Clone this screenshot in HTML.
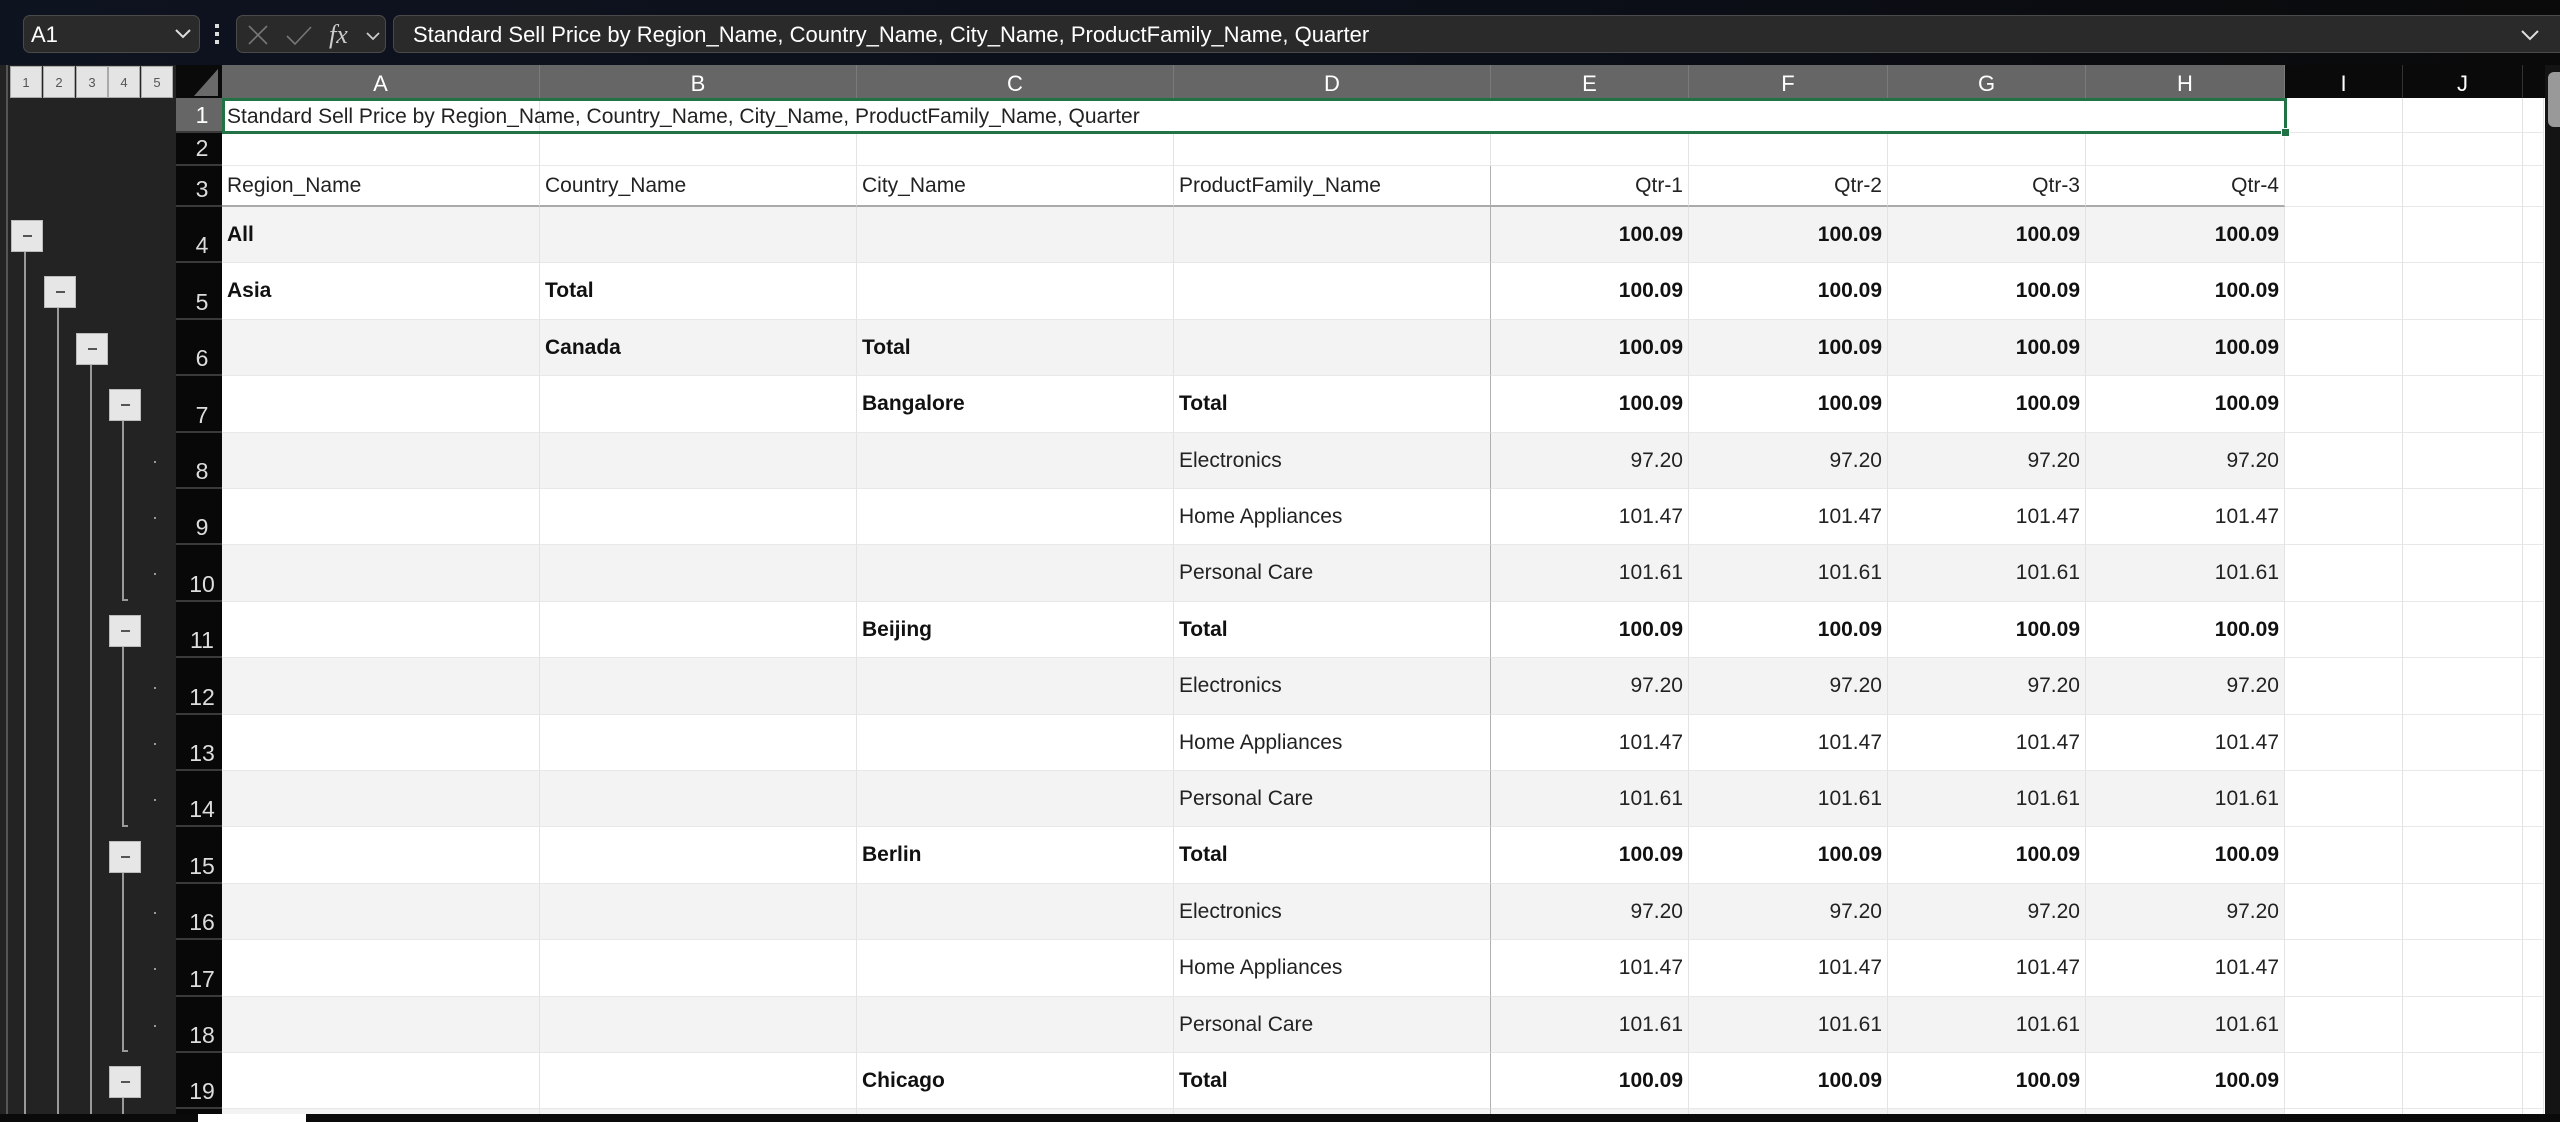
<!DOCTYPE html>
<html><head><meta charset="utf-8"><style>
*{margin:0;padding:0;box-sizing:border-box}
body{width:2560px;height:1122px;overflow:hidden;background:#0c1018;font-family:"Liberation Sans",Arial,sans-serif;position:relative}
.abs{position:absolute}
.top{left:0;top:0;width:2560px;height:65px;background:linear-gradient(90deg,#0e1320,#0b0f18 60%,#0a0a0a)}
.box{position:absolute;top:15px;height:38px;background:#2a2a2a;border:1px solid #4a4a4a;border-radius:7px;color:#fff}
.outline{left:0;top:65px;width:176px;height:1050px;background:#232323}
.lvl{position:absolute;top:66px;height:32px;width:32px;background:#e4e4e4;border:1px solid #aaa;color:#555;font-size:13px;text-align:center;line-height:31px}
.btn{position:absolute;width:32px;height:32px;background:#e6e6e6;border:1px solid #bbb}
.btn:after{content:"";position:absolute;left:11px;top:14px;width:9px;height:2px;background:#555}
.vl{position:absolute;width:2px;background:#9a9a9a}
.dot{position:absolute;width:2px;height:2px;background:#999;left:154px}
.colh{position:absolute;top:65px;height:33px;color:#fff;font-size:22px;text-align:center;line-height:38px;border-right:1px solid #7a7a7a}
.rh{position:absolute;left:176px;width:46px;background:#080808;color:#ddd;font-size:23px;text-align:center;border-bottom:2px solid #3a3a3a;display:flex;align-items:flex-end;justify-content:center;padding-bottom:2px;padding-left:6px}
.row{position:absolute;left:222px;width:2323px;display:flex;background:#fff}
.c{height:100%;border-right:1px solid #e3e3e3;border-bottom:1px solid #e8e8e8;font-size:21px;color:#222;padding:0 5px;white-space:nowrap;display:flex;align-items:center;overflow:visible}
.r{justify-content:flex-end}
.b{font-weight:bold;color:#111}
.s .st{background:#f3f3f3}
.w0{width:318px}.w1{width:317px}.w4{width:198px}.w5{width:199px}.wI{width:118px}.wJ{width:120px}.wK{width:21px}
.dk{border-right:1px solid #b0b0b0}
.hb{border-bottom:2px solid #aaa}
</style></head><body>
<div class="abs top"></div>
<div class="box" style="left:23px;width:177px;"><span style="position:absolute;left:7px;top:6px;font-size:22px">A1</span><svg class="abs" style="left:150px;top:12px" width="18" height="12"><path d="M2 2 L9 9 L16 2" stroke="#ddd" stroke-width="2" fill="none"/></svg></div>
<div class="abs" style="left:215px;top:24px;width:4px;height:4px;background:#ddd"></div>
<div class="abs" style="left:215px;top:32px;width:4px;height:4px;background:#ddd"></div>
<div class="abs" style="left:215px;top:40px;width:4px;height:4px;background:#ddd"></div>
<div class="box" style="left:236px;width:150px;"><svg class="abs" style="left:8px;top:6px" width="140" height="28"><path d="M4 4 L22 22 M22 4 L4 22" stroke="#777" stroke-width="1.6"/><path d="M42 14 L50 22 L66 5" stroke="#777" stroke-width="1.6" fill="none"/><text x="84" y="21" font-family="Liberation Serif,serif" font-style="italic" font-size="26" fill="#ccc">fx</text><path d="M122 11 L128 17 L134 11" stroke="#ccc" stroke-width="1.8" fill="none"/></svg></div>
<div class="box" style="left:393px;width:2175px;"><span style="position:absolute;left:19px;top:6px;font-size:22px">Standard Sell Price by Region_Name, Country_Name, City_Name, ProductFamily_Name, Quarter</span><svg class="abs" style="left:2126px;top:13px" width="20" height="12"><path d="M2 2 L10 10 L18 2" stroke="#ddd" stroke-width="2" fill="none"/></svg></div>

<div class="abs outline"></div>
<div class="lvl" style="left:10px">1</div><div class="lvl" style="left:43px">2</div><div class="lvl" style="left:76px">3</div><div class="lvl" style="left:108px">4</div><div class="lvl" style="left:141px">5</div>
<div class="abs" style="left:176px;top:65px;width:46px;height:33px;background:#0a0a0a"></div>
<svg class="abs" style="left:176px;top:65px" width="46" height="33"><polygon points="42,4 42,31 18,31" fill="#6a6a6a"/></svg>

<div class="vl" style="left:6px;top:65px;height:1050px;background:#555"></div>
<div class="vl" style="left:24px;top:252px;height:863px"></div>
<div class="vl" style="left:57px;top:308px;height:807px"></div>
<div class="vl" style="left:90px;top:365px;height:750px"></div>
<div class="vl" style="left:122px;top:421px;height:180px"></div><div class="vl" style="left:122px;top:599px;width:6px;height:2px"></div>
<div class="vl" style="left:122px;top:647px;height:180px"></div><div class="vl" style="left:122px;top:825px;width:6px;height:2px"></div>
<div class="vl" style="left:122px;top:872px;height:180px"></div><div class="vl" style="left:122px;top:1050px;width:6px;height:2px"></div>
<div class="vl" style="left:122px;top:1098px;height:20px"></div>
<div class="btn" style="left:11px;top:220px"></div>
<div class="btn" style="left:44px;top:276px"></div>
<div class="btn" style="left:76px;top:333px"></div>
<div class="btn" style="left:109px;top:389px"></div>
<div class="btn" style="left:109px;top:615px"></div>
<div class="btn" style="left:109px;top:841px"></div>
<div class="btn" style="left:109px;top:1066px"></div>
<div class="dot" style="top:461px"></div><div class="dot" style="top:517px"></div><div class="dot" style="top:573px"></div>
<div class="dot" style="top:687px"></div><div class="dot" style="top:743px"></div><div class="dot" style="top:799px"></div>
<div class="dot" style="top:912px"></div><div class="dot" style="top:968px"></div><div class="dot" style="top:1025px"></div>

<div class="abs" style="left:222px;top:65px;width:2323px;height:33px;background:#0a0a0a"></div>
<div class="colh" style="left:222px;width:318px;background:#666">A</div>
<div class="colh" style="left:540px;width:317px;background:#666">B</div>
<div class="colh" style="left:857px;width:317px;background:#666">C</div>
<div class="colh" style="left:1174px;width:317px;background:#666">D</div>
<div class="colh" style="left:1491px;width:198px;background:#666">E</div>
<div class="colh" style="left:1689px;width:199px;background:#666">F</div>
<div class="colh" style="left:1888px;width:198px;background:#666">G</div>
<div class="colh" style="left:2086px;width:199px;background:#666">H</div>
<div class="colh" style="left:2285px;width:118px;border-right:1px solid #333">I</div>
<div class="colh" style="left:2403px;width:120px;border-right:1px solid #333">J</div>
<div class="abs" style="left:2545px;top:65px;width:15px;height:1050px;background:#141414"></div>
<div class="abs" style="left:2548px;top:72px;width:12px;height:55px;background:#999;border-radius:6px 0 0 6px"></div>

<div class="rh" style="top:98px;height:35px;background:#666;color:#fff">1</div>
<div class="rh" style="top:133px;height:33px">2</div>
<div class="rh" style="top:166px;height:41px">3</div>
<div class="rh" style="top:207px;height:56px">4</div>
<div class="rh" style="top:263px;height:57px">5</div>
<div class="rh" style="top:320px;height:56px">6</div>
<div class="rh" style="top:376px;height:57px">7</div>
<div class="rh" style="top:433px;height:56px">8</div>
<div class="rh" style="top:489px;height:56px">9</div>
<div class="rh" style="top:545px;height:57px">10</div>
<div class="rh" style="top:602px;height:56px">11</div>
<div class="rh" style="top:658px;height:57px">12</div>
<div class="rh" style="top:715px;height:56px">13</div>
<div class="rh" style="top:771px;height:56px">14</div>
<div class="rh" style="top:827px;height:57px">15</div>
<div class="rh" style="top:884px;height:56px">16</div>
<div class="rh" style="top:940px;height:57px">17</div>
<div class="rh" style="top:997px;height:56px">18</div>
<div class="rh" style="top:1053px;height:56px">19</div>
<div class="rh" style="top:1109px;height:10px"></div>

<div class="row" style="top:98px;height:35px"><div class="c w0" style="overflow:visible;z-index:2;padding-top:4px">Standard Sell Price by Region_Name, Country_Name, City_Name, ProductFamily_Name, Quarter</div><div class="c w1" style="border-right:none"></div><div class="c w1" style="border-right:none"></div><div class="c w1" style="border-right:none"></div><div class="c w4" style="border-right:none"></div><div class="c w5" style="border-right:none"></div><div class="c w4" style="border-right:none"></div><div class="c w5"></div><div class="c wI"></div><div class="c wJ"></div><div class="c wK"></div></div>
<div class="abs" style="left:222px;top:98px;width:2065px;height:36px;border:3px solid #217346;z-index:3"></div>
<div class="abs" style="left:2281px;top:128px;width:9px;height:9px;background:#217346;border:1px solid #fff;z-index:4"></div>

<div class="row" style="top:133px;height:33px"><div class="c w0"></div><div class="c w1"></div><div class="c w1"></div><div class="c w1"></div><div class="c w4"></div><div class="c w5"></div><div class="c w4"></div><div class="c w5"></div><div class="c wI"></div><div class="c wJ"></div><div class="c wK"></div></div>
<div class="row" style="top:166px;height:41px"><div class="c w0 hb">Region_Name</div><div class="c w1 hb">Country_Name</div><div class="c w1 hb">City_Name</div><div class="c w1 dk hb">ProductFamily_Name</div><div class="c w4 r hb">Qtr-1</div><div class="c w5 r hb">Qtr-2</div><div class="c w4 r hb">Qtr-3</div><div class="c w5 r hb">Qtr-4</div><div class="c wI"></div><div class="c wJ"></div><div class="c wK"></div></div>

<div class="row s" style="top:207px;height:56px"><div class="c w0 st b">All</div><div class="c w1 st"></div><div class="c w1 st"></div><div class="c w1 st dk"></div><div class="c w4 st r b">100.09</div><div class="c w5 st r b">100.09</div><div class="c w4 st r b">100.09</div><div class="c w5 st r b">100.09</div><div class="c wI"></div><div class="c wJ"></div><div class="c wK"></div></div>
<div class="row" style="top:263px;height:57px"><div class="c w0 b">Asia</div><div class="c w1 b">Total</div><div class="c w1"></div><div class="c w1 dk"></div><div class="c w4 r b">100.09</div><div class="c w5 r b">100.09</div><div class="c w4 r b">100.09</div><div class="c w5 r b">100.09</div><div class="c wI"></div><div class="c wJ"></div><div class="c wK"></div></div>
<div class="row s" style="top:320px;height:56px"><div class="c w0 st"></div><div class="c w1 st b">Canada</div><div class="c w1 st b">Total</div><div class="c w1 st dk"></div><div class="c w4 st r b">100.09</div><div class="c w5 st r b">100.09</div><div class="c w4 st r b">100.09</div><div class="c w5 st r b">100.09</div><div class="c wI"></div><div class="c wJ"></div><div class="c wK"></div></div>
<div class="row" style="top:376px;height:57px"><div class="c w0"></div><div class="c w1"></div><div class="c w1 b">Bangalore</div><div class="c w1 dk b">Total</div><div class="c w4 r b">100.09</div><div class="c w5 r b">100.09</div><div class="c w4 r b">100.09</div><div class="c w5 r b">100.09</div><div class="c wI"></div><div class="c wJ"></div><div class="c wK"></div></div>
<div class="row s" style="top:433px;height:56px"><div class="c w0 st"></div><div class="c w1 st"></div><div class="c w1 st"></div><div class="c w1 st dk">Electronics</div><div class="c w4 st r">97.20</div><div class="c w5 st r">97.20</div><div class="c w4 st r">97.20</div><div class="c w5 st r">97.20</div><div class="c wI"></div><div class="c wJ"></div><div class="c wK"></div></div>
<div class="row" style="top:489px;height:56px"><div class="c w0"></div><div class="c w1"></div><div class="c w1"></div><div class="c w1 dk">Home Appliances</div><div class="c w4 r">101.47</div><div class="c w5 r">101.47</div><div class="c w4 r">101.47</div><div class="c w5 r">101.47</div><div class="c wI"></div><div class="c wJ"></div><div class="c wK"></div></div>
<div class="row s" style="top:545px;height:57px"><div class="c w0 st"></div><div class="c w1 st"></div><div class="c w1 st"></div><div class="c w1 st dk">Personal Care</div><div class="c w4 st r">101.61</div><div class="c w5 st r">101.61</div><div class="c w4 st r">101.61</div><div class="c w5 st r">101.61</div><div class="c wI"></div><div class="c wJ"></div><div class="c wK"></div></div>
<div class="row" style="top:602px;height:56px"><div class="c w0"></div><div class="c w1"></div><div class="c w1 b">Beijing</div><div class="c w1 dk b">Total</div><div class="c w4 r b">100.09</div><div class="c w5 r b">100.09</div><div class="c w4 r b">100.09</div><div class="c w5 r b">100.09</div><div class="c wI"></div><div class="c wJ"></div><div class="c wK"></div></div>
<div class="row s" style="top:658px;height:57px"><div class="c w0 st"></div><div class="c w1 st"></div><div class="c w1 st"></div><div class="c w1 st dk">Electronics</div><div class="c w4 st r">97.20</div><div class="c w5 st r">97.20</div><div class="c w4 st r">97.20</div><div class="c w5 st r">97.20</div><div class="c wI"></div><div class="c wJ"></div><div class="c wK"></div></div>
<div class="row" style="top:715px;height:56px"><div class="c w0"></div><div class="c w1"></div><div class="c w1"></div><div class="c w1 dk">Home Appliances</div><div class="c w4 r">101.47</div><div class="c w5 r">101.47</div><div class="c w4 r">101.47</div><div class="c w5 r">101.47</div><div class="c wI"></div><div class="c wJ"></div><div class="c wK"></div></div>
<div class="row s" style="top:771px;height:56px"><div class="c w0 st"></div><div class="c w1 st"></div><div class="c w1 st"></div><div class="c w1 st dk">Personal Care</div><div class="c w4 st r">101.61</div><div class="c w5 st r">101.61</div><div class="c w4 st r">101.61</div><div class="c w5 st r">101.61</div><div class="c wI"></div><div class="c wJ"></div><div class="c wK"></div></div>
<div class="row" style="top:827px;height:57px"><div class="c w0"></div><div class="c w1"></div><div class="c w1 b">Berlin</div><div class="c w1 dk b">Total</div><div class="c w4 r b">100.09</div><div class="c w5 r b">100.09</div><div class="c w4 r b">100.09</div><div class="c w5 r b">100.09</div><div class="c wI"></div><div class="c wJ"></div><div class="c wK"></div></div>
<div class="row s" style="top:884px;height:56px"><div class="c w0 st"></div><div class="c w1 st"></div><div class="c w1 st"></div><div class="c w1 st dk">Electronics</div><div class="c w4 st r">97.20</div><div class="c w5 st r">97.20</div><div class="c w4 st r">97.20</div><div class="c w5 st r">97.20</div><div class="c wI"></div><div class="c wJ"></div><div class="c wK"></div></div>
<div class="row" style="top:940px;height:57px"><div class="c w0"></div><div class="c w1"></div><div class="c w1"></div><div class="c w1 dk">Home Appliances</div><div class="c w4 r">101.47</div><div class="c w5 r">101.47</div><div class="c w4 r">101.47</div><div class="c w5 r">101.47</div><div class="c wI"></div><div class="c wJ"></div><div class="c wK"></div></div>
<div class="row s" style="top:997px;height:56px"><div class="c w0 st"></div><div class="c w1 st"></div><div class="c w1 st"></div><div class="c w1 st dk">Personal Care</div><div class="c w4 st r">101.61</div><div class="c w5 st r">101.61</div><div class="c w4 st r">101.61</div><div class="c w5 st r">101.61</div><div class="c wI"></div><div class="c wJ"></div><div class="c wK"></div></div>
<div class="row" style="top:1053px;height:56px"><div class="c w0"></div><div class="c w1"></div><div class="c w1 b">Chicago</div><div class="c w1 dk b">Total</div><div class="c w4 r b">100.09</div><div class="c w5 r b">100.09</div><div class="c w4 r b">100.09</div><div class="c w5 r b">100.09</div><div class="c wI"></div><div class="c wJ"></div><div class="c wK"></div></div>
<div class="row s" style="top:1109px;height:10px"><div class="c w0 st"></div><div class="c w1 st"></div><div class="c w1 st"></div><div class="c w1 st dk"></div><div class="c w4 st"></div><div class="c w5 st"></div><div class="c w4 st"></div><div class="c w5 st"></div><div class="c wI"></div><div class="c wJ"></div><div class="c wK"></div></div>

<div class="abs" style="left:0;top:1114px;width:2560px;height:8px;background:#0a0a0a"></div>
<div class="abs" style="left:198px;top:1114px;width:108px;height:8px;background:#fff"></div>
</body></html>
